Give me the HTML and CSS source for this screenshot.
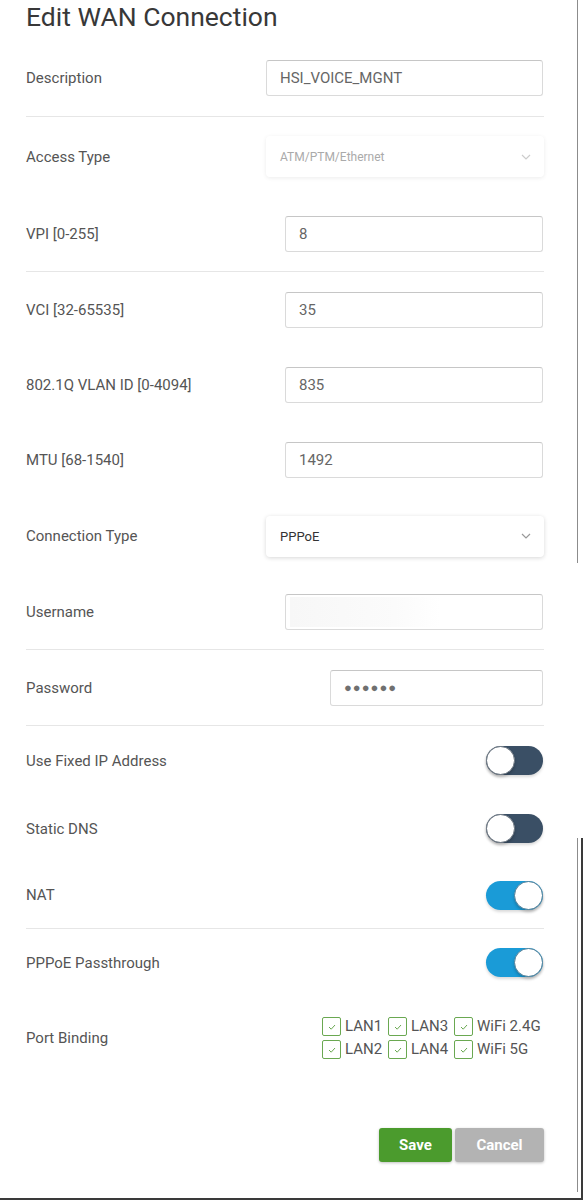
FILE: index.html
```html
<!DOCTYPE html>
<html>
<head>
<meta charset="utf-8">
<link rel="stylesheet" href="styles.css">
</head>
<body>
<div class="page">
  <h1 class="title">Edit WAN Connection</h1>
  <div class="form">
    <div class="row row-desc divided">
      <span class="label">Description</span>
      <div class="input w-wide">HSI_VOICE_MGNT</div>
    </div>
    <div class="row row-access">
      <span class="label">Access Type</span>
      <div class="select disabled">ATM/PTM/Ethernet
        <svg class="chev" width="10" height="6" viewBox="0 0 10 6"><path d="M1 1l4 4 4-4" fill="none" stroke="currentColor" stroke-width="1.2"/></svg>
      </div>
    </div>
    <div class="row divided">
      <span class="label">VPI [0-255]</span>
      <div class="input w-mid">8</div>
    </div>
    <div class="row row-short">
      <span class="label">VCI [32-65535]</span>
      <div class="input w-mid">35</div>
    </div>
    <div class="row row-short">
      <span class="label">802.1Q VLAN ID [0-4094]</span>
      <div class="input w-mid">835</div>
    </div>
    <div class="row">
      <span class="label">MTU [68-1540]</span>
      <div class="input w-mid">1492</div>
    </div>
    <div class="row">
      <span class="label">Connection Type</span>
      <div class="select">PPPoE
        <svg class="chev" width="10" height="6" viewBox="0 0 10 6"><path d="M1 1l4 4 4-4" fill="none" stroke="currentColor" stroke-width="1.2"/></svg>
      </div>
    </div>
    <div class="row divided">
      <span class="label">Username</span>
      <div class="input w-mid blurred"><span class="blur"></span></div>
    </div>
    <div class="row divided">
      <span class="label">Password</span>
      <div class="input w-narrow dots">●●●●●●</div>
    </div>
    <div class="row row-toggle row-toggle-first">
      <span class="label">Use Fixed IP Address</span>
      <span class="toggle off"><span class="knob"></span></span>
    </div>
    <div class="row row-toggle">
      <span class="label">Static DNS</span>
      <span class="toggle off"><span class="knob"></span></span>
    </div>
    <div class="row row-toggle divided">
      <span class="label">NAT</span>
      <span class="toggle on"><span class="knob"></span></span>
    </div>
    <div class="row row-toggle">
      <span class="label">PPPoE Passthrough</span>
      <span class="toggle on"><span class="knob"></span></span>
    </div>
    <div class="row row-port">
      <span class="label">Port Binding</span>
      <div class="ports">
        <label class="port"><span class="cb"><svg width="10" height="8" viewBox="0 0 10 8"><path d="M2 4l2.2 2.2L8 2" fill="none" stroke="currentColor" stroke-width="1"/></svg></span>LAN1</label>
        <label class="port"><span class="cb"><svg width="10" height="8" viewBox="0 0 10 8"><path d="M2 4l2.2 2.2L8 2" fill="none" stroke="currentColor" stroke-width="1"/></svg></span>LAN3</label>
        <label class="port"><span class="cb"><svg width="10" height="8" viewBox="0 0 10 8"><path d="M2 4l2.2 2.2L8 2" fill="none" stroke="currentColor" stroke-width="1"/></svg></span>WiFi 2.4G</label>
        <label class="port"><span class="cb"><svg width="10" height="8" viewBox="0 0 10 8"><path d="M2 4l2.2 2.2L8 2" fill="none" stroke="currentColor" stroke-width="1"/></svg></span>LAN2</label>
        <label class="port"><span class="cb"><svg width="10" height="8" viewBox="0 0 10 8"><path d="M2 4l2.2 2.2L8 2" fill="none" stroke="currentColor" stroke-width="1"/></svg></span>LAN4</label>
        <label class="port"><span class="cb"><svg width="10" height="8" viewBox="0 0 10 8"><path d="M2 4l2.2 2.2L8 2" fill="none" stroke="currentColor" stroke-width="1"/></svg></span>WiFi 5G</label>
      </div>
    </div>
    <div class="actions">
      <button class="btn btn-save">Save</button>
      <button class="btn btn-cancel">Cancel</button>
    </div>
  </div>
  <span class="edge edge-top"></span>
  <span class="edge edge-bottom-light"></span>
  <span class="edge edge-bottom-dark"></span>
  <span class="edge edge-base"></span>
</div>
</body>
</html>
```
FILE: styles.css
```css
* { box-sizing: border-box; }
html, body { margin: 0; padding: 0; background: #fff; }
body { font-family: Roboto, "Liberation Sans", sans-serif; color: #555; }
.page { position: relative; width: 587px; height: 1200px; overflow: hidden; }
.title {
  margin: 0; padding: 1px 0 0 26px; height: 40px;
  font-size: 26.5px; font-weight: 400; color: #383838; line-height: 32px;
}
.form { margin-left: 26px; width: 518px; }
.row {
  display: flex; align-items: center; justify-content: space-between;
  height: 76px; font-size: 15px;
}
.row-desc { height: 77px; }
.row-access { height: 79px; }
.row-short { height: 75px; }
.row-toggle { height: 67px; }
.row-toggle-first { height: 69px; }
.row-port { height: 84px; }
.divided { border-bottom: 1px solid #e6e6e6; }
.label { color: #555; }
.input {
  height: 36px; border: 1px solid #dadada; border-top-color: #c6c6c6;
  border-radius: 3px; padding-left: 13px; display: flex; align-items: center;
  font-size: 15px; color: #666; background: #fff; margin-right: 1px;
}
.w-wide { width: 277px; }
.w-mid { width: 258px; }
.w-narrow { width: 213px; }
.blurred { padding-left: 0; }
.blur { display: block; width: 150px; height: 30px; margin-left: 4px; background: linear-gradient(90deg, #f7f7f7, #fbfbfb 70%, #fff); }
.dots { font-size: 13px; color: #707070; letter-spacing: 1px; }
.select {
  width: 278px; height: 41px; border-radius: 4px; background: #fff;
  box-shadow: 0 1px 4px rgba(0,0,0,0.16); padding: 0 14px;
  display: flex; align-items: center; justify-content: space-between;
  font-size: 13px; color: #333;
}
.select.disabled { color: #aaa; font-size: 12px; box-shadow: 0 1px 4px rgba(0,0,0,0.08); }
.chev { color: #999; margin-right: -1px; }
.select.disabled .chev { color: #ccc; }
.toggle {
  position: relative; width: 57px; height: 29px; border-radius: 15px;
  display: block; margin-right: 1px;
  box-shadow: 0 2px 3px rgba(0,0,0,0.15);
}
.toggle.off { background: #3a4f65; }
.toggle.on { background: #1a9bd7; }
.knob {
  position: absolute; top: 0; width: 29px; height: 29px; border-radius: 50%;
  background: #fff; border: 1.5px solid #6b7580;
  box-shadow: 0 2px 3px rgba(0,0,0,0.2);
}
.toggle.off .knob { left: 0; }
.toggle.on .knob { right: 0; border-color: #4f7f99; }
.ports {
  display: grid; grid-template-columns: 66px 66px 90px; row-gap: 4px;
  font-size: 15px; color: #555;
}
.port { display: flex; align-items: center; gap: 4px; height: 19px; line-height: 19px; }
.cb {
  width: 19px; height: 19px; border: 1px solid #6aa851; border-radius: 2px;
  display: flex; align-items: center; justify-content: center; color: #6aa851;
}
.actions { display: flex; justify-content: flex-end; gap: 3px; padding-top: 48px; }
.btn {
  height: 34px; border: 0; border-radius: 3px; font-family: Roboto, "Liberation Sans", sans-serif;
  font-size: 15px; font-weight: 700; color: #fff; box-shadow: 0 1px 3px rgba(0,0,0,0.25);
}
.btn-save { width: 73px; background: #4b9b2d; }
.btn-cancel { width: 89px; background: #b3b3b3; }
.edge { position: absolute; display: block; }
.edge-top { left: 577px; top: 0; width: 1px; height: 563px; background: #8c8c8c; }
.edge-bottom-light { left: 577px; top: 838px; width: 1px; height: 354px; background: #8c8c8c; }
.edge-bottom-dark { left: 581px; top: 838px; width: 2px; height: 362px; background: #3a3a3a; }
.edge-base { left: 0; top: 1198px; width: 583px; height: 2px; background: #3a3a3a; }
```
